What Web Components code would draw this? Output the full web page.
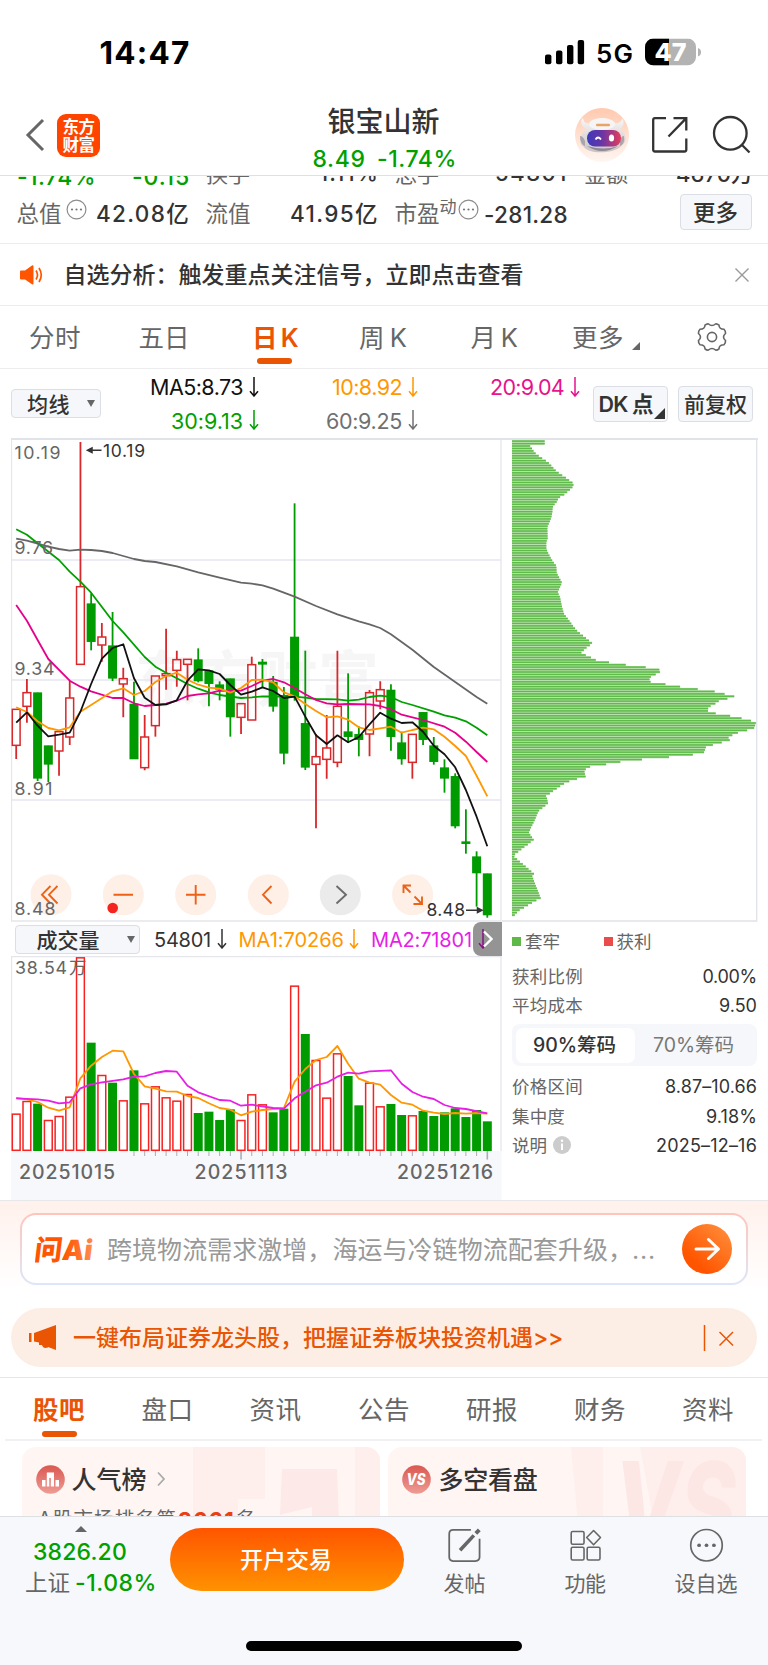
<!DOCTYPE html>
<html lang="zh-CN">
<head>
<meta charset="utf-8">
<title>银宝山新 - 日K</title>
<style>
html,body{margin:0;padding:0;background:#fff}
body{width:768px;height:1665px;overflow:hidden;font-family:Inter,"Noto Sans CJK SC",sans-serif;color:#333}
</style>
</head>
<body>
<stock-page></stock-page>
<script>
const FONT = 'Inter,"Noto Sans CJK SC",sans-serif';
const define = (name, html, setup) => {
  const t = document.createElement('template');
  t.innerHTML = html;
  customElements.define(name, class extends HTMLElement {
    constructor() {
      super();
      this.attachShadow({mode: 'open'}).append(t.content.cloneNode(true));
    }
    connectedCallback() { if (setup) setup(this, this.shadowRoot); }
  });
};

/* One line of text: s size, c colour, b weight, m left offset, w advance width */
define('f-t', `<style>
:host{display:block;flex:none;white-space:nowrap;line-height:1}
span{display:inline-block;line-height:1;vertical-align:top;transform:translateY(var(--drop,.7px))}
</style><span><slot></slot></span>`, (el, root) => {
  const a = n => el.getAttribute(n), st = el.style;
  if (a('s')) st.fontSize = a('s') + 'px';
  if (a('c')) st.color = a('c');
  if (a('b')) st.fontWeight = a('b');
  if (a('m')) st.marginLeft = a('m') + 'px';
  if (/[\u4e00-\u9fff]/.test(el.textContent)) st.setProperty('--drop', '.055em');
  if (a('w')) {
    const w = +a('w'), sp = root.querySelector('span');
    const n = [...el.textContent].length;
    sp.style.letterSpacing = '0.001px';
    const nat = sp.getBoundingClientRect().width;
    sp.style.letterSpacing = ((w - nat) / n).toFixed(3) + 'px';
    st.width = w + 'px';
  }
});

define('down-arrow', `<style>:host{display:block;flex:none;width:10px;height:20px}svg{display:block}</style>
<svg width="10" height="20" viewBox="0 0 10 20" fill="none" stroke="currentColor" stroke-width="1.5"><path d="M5 0V19M1 14.2L5 19L9 14.2"/></svg>`);

define('info-dots', `<style>:host{display:block;flex:none;width:21px;height:21px}svg{display:block}</style>
<svg width="21" height="21" viewBox="0 0 21 21"><circle cx="10.5" cy="10.5" r="9.4" fill="none" stroke="#8c8c8c" stroke-width="1.2"/><g fill="#777"><circle cx="6" cy="10.5" r="1.1"/><circle cx="10.5" cy="10.5" r="1.1"/><circle cx="15" cy="10.5" r="1.1"/></g></svg>`);

define('chip-button', `<style>:host{display:flex;flex:none;box-sizing:border-box;align-items:center;border:1px solid #dcdee5;border-radius:4px;background:#f6f7fa;position:relative}</style><slot></slot>`);

define('status-bar', `<style>
:host{display:flex;box-sizing:border-box;height:95px;padding-top:9px;align-items:center}
svg{display:block;flex:none}
</style>
<f-t m="99.500" w="91" s="31.5" b="700" c="#000" style="--drop:1px">14:47</f-t>
<svg style="margin-left:354.500px" width="40" height="26" viewBox="0 0 40 26"><rect x="0" y="15.5" width="6.4" height="9.7" rx="2"/><rect x="11" y="11.5" width="6.4" height="13.7" rx="2"/><rect x="22" y="6" width="6.4" height="19.2" rx="2"/><rect x="32.7" y="1" width="6.4" height="24.2" rx="2"/></svg>
<f-t m="11" w="38" s="26" b="600" c="#000" style="--drop:1.700px">5G</f-t>
<svg style="margin-left:11px" width="58" height="28" viewBox="645 37.5 58 28"><clipPath id="k"><rect x="645" y="38" width="51" height="27" rx="8.5"/></clipPath><g clip-path="url(#k)"><rect x="645" y="38" width="51" height="27" fill="#b3b3b3"/><rect x="645" y="38" width="24" height="27"/></g><path d="M698 47.5a4.5 4.5 0 0 1 0 8.500z" fill="#b3b3b3"/><text x="654.500" y="60.6" font-family='${FONT}' font-weight="800" font-size="25" textLength="32" lengthAdjust="spacingAndGlyphs" fill="#fff">47</text></svg>`);

define('app-header', `<style>
:host{display:flex;height:80px;align-items:center;border-bottom:1px solid #e0e0e2}
svg{display:block;flex:none}
.logo{flex:none;width:43px;height:43px;border-radius:9px;background:#ff4400;margin-left:12px;display:flex;flex-direction:column;justify-content:center;gap:1px}
.mid{width:160px;height:80px;margin-left:213px;flex:none;display:flex;flex-direction:column;padding-top:11px;box-sizing:border-box}
.p{display:flex;margin-top:12.500px}
</style>
<svg style="margin-left:25px" width="20" height="34" viewBox="0 0 20 34" fill="none" stroke="#666" stroke-width="3"><path d="M18 2L3 17L18 32"/></svg>
<div class="logo"><f-t m="5.5" w="32" s="16.5" b="700" c="#fff">东方</f-t><f-t m="5.500" w="32" s="16.5" b="700" c="#fff">财富</f-t></div>
<div class="mid"><f-t m="14.500" w="112" s="28" b="500" c="#333">银宝山新</f-t>
<div class="p"><f-t m="-.500" w="53" s="23" b="500" c="#00a000">8.49</f-t><f-t m="11.500" w="80" s="23" b="500" c="#00a000">-1.74%</f-t></div></div>
<svg style="margin-left:102px" width="54" height="54" viewBox="0 0 54 54">
<defs><linearGradient id="a" x2="0" y2="1"><stop stop-color="#ffc9ae"/><stop offset="1" stop-color="#fff6f2"/></linearGradient><linearGradient id="b"><stop stop-color="#3d3ab8"/><stop offset=".45" stop-color="#6a35a5"/><stop offset="1" stop-color="#e63c5c"/></linearGradient><linearGradient id="c" x2="0" y2="1"><stop stop-color="#f8f6f6"/><stop offset="1" stop-color="#c9c3c6"/></linearGradient></defs>
<circle cx="27" cy="27" r="27" fill="url(#a)"/>
<path d="M11 21C5 17 5 12 8 10C9 15 12 16 16 15.500C22 9 32 8 39 15C43 16 46 14 47.500 10.500C50 15 48 19 45 21C52 26 52 34 47 37C43 45 14 48 8 38C4 36 4 27 11 21Z" fill="url(#c)"/>
<ellipse cx="27" cy="16" rx="13" ry="6" fill="#f6f4f5"/><rect x="21" y="15.800" width="14" height="2.500" rx="1" fill="#e8a468"/>
<path d="M5 28q3 0 5 5v5q-5-2-5-10zM49 28q-3 0-4 5v5q5-2 4-10z" fill="#aaa5aa"/>
<rect x="12" y="22" width="34" height="16.500" rx="8" fill="url(#b)"/>
<path d="M20.500 31.500q2.500-4 5.500 0" fill="none" stroke="#fff" stroke-width="1.800"/><ellipse cx="36.500" cy="30" rx="2.600" ry="3.500" fill="#fff"/><path d="M12 38q15 10 31 0-13 5-31 0z" fill="#8e8992"/></svg>
<svg style="margin-left:22px" width="38" height="38" viewBox="651 116.500 38 38" fill="none" stroke="#333" stroke-width="2.300"><path d="M666 118.600H655Q653.200 118.600 653.200 120.400V150Q653.200 152 655 152H684.500Q686.300 152 686.300 150V139M673.500 118.600H686.300V131M686.300 118.600L668.500 137"/></svg>
<svg style="margin-left:22px" width="42" height="42" viewBox="711 114 42 42" fill="none" stroke="#333" stroke-width="2.300"><circle cx="730.300" cy="133.300" r="16.300"/><path d="M741.500 144.500L749.500 152.500"/></svg>`);

define('quote-panel', `<style>
:host{display:block;height:67px;border-bottom:1px solid #ececee}
.cut{display:flex;height:12px;overflow:hidden;align-items:flex-end}
.cut f-t{--drop:0px}
.row{display:flex;height:51px;align-items:center}
</style>
<div class="cut"><f-t m="17" w="79" s="23" b="500" c="#00a000" style="margin-bottom:-1px">-1.74%</f-t><f-t m="36" w="58" s="23" b="500" c="#00a000" style="margin-bottom:-1px">-0.15</f-t>
<f-t m="16" w="44" s="22" c="#666" style="margin-bottom:4px">换手</f-t><f-t m="69" w="60" s="22" b="500" style="margin-bottom:4.500px">1.11%</f-t><f-t m="16" w="44" s="22" c="#666" style="margin-bottom:4px">总手</f-t><f-t m="56" w="73" s="22" b="500" style="margin-bottom:4.500px">54801</f-t><f-t m="16" w="44" s="22" c="#666" style="margin-bottom:4px">金额</f-t><f-t m="48" w="77" s="22" b="500" style="margin-bottom:4.500px">4670万</f-t></div>
<div class="row"><f-t m="16.500" w="45" s="22.500" c="#666">总值</f-t><info-dots style="margin:0 0 9px 4px"></info-dots><f-t m="9.500" w="94" s="22.500" b="500">42.08亿</f-t><f-t m="15.500" w="45" s="22.500" c="#666">流值</f-t><f-t m="39.500" w="89" s="22.500" b="500">41.95亿</f-t><f-t m="15.500" w="45" s="22.500" c="#666">市盈</f-t><f-t m="0" w="17" s="17" c="#666" style="margin-bottom:15px">动</f-t><info-dots style="margin:0 0 9px 1px"></info-dots><f-t m="5.500" w="84" s="22.500" b="500" style="--drop:1.800px">-281.28</f-t>
<chip-button style="width:72px;height:36px;margin-left:111.500px;margin-bottom:3px"><f-t m="12.500" w="45" s="22.500" b="500">更多</f-t></chip-button></div>`);

define('notice-row', `<style>:host{display:flex;height:61px;align-items:center;border-bottom:1px solid #ececee}svg{display:block;flex:none}</style>
<svg style="margin-left:20px" width="24" height="20" viewBox="0 0 24 20" fill="#ff5500"><path d="M0 6.500Q0 5.500 1 5.500H5L12 .5Q13.500-.2 13.500 1.500V18.500Q13.500 20 12 19.300L5 14.500H1Q0 14.500 0 13.500Z"/><path d="M16 5.500q3 4.500 0 9M19 3q4.500 7 0 14" fill="none" stroke="#ff5500" stroke-width="1.700"/></svg>
<f-t m="19.500" w="460" s="23" b="500" style="width:460px">自选分析：触发重点关注信号，立即点击查看</f-t>
<svg style="margin-left:210.500px" width="16" height="16" viewBox="0 0 16 16" stroke="#999" stroke-width="1.400"><path d="M1.500 1.500L14.500 14.500M14.500 1.500L1.500 14.500"/></svg>`);

define('period-tabs', `<style>:host{display:flex;height:62px;align-items:center;border-bottom:1px solid #ececee;position:relative}svg{display:block;flex:none}
i{position:absolute;left:257px;top:52px;width:35px;height:5.500px;border-radius:3px;background:#ea5504}</style>
<f-t m="29" w="52" s="25.500" c="#666">分时</f-t><f-t m="57.500" w="51" s="25.500" c="#666">五日</f-t><f-t m="62.500" w="45" s="25.500" b="600" c="#ea5504">日 K</f-t><f-t m="62" w="47" s="25.500" c="#666">周 K</f-t><f-t m="64.500" w="46" s="25.500" c="#666">月 K</f-t><f-t m="55.500" w="52" s="25.500" c="#666">更多</f-t>
<svg style="margin:17px 0 0 8px" width="8" height="8"><path d="M8 0V8H0Z" fill="#666"/></svg>
<svg style="margin-left:56.500px" width="30" height="30" viewBox="-15 -15 30 30" fill="none" stroke="#666" stroke-width="1.600"><path d="M-3.500-13Q0-10 3.500-13Q5-13.500 7-11.800Q7.200-7.800 12-7.800Q13.800-6 13.500-3.500Q9.500 0 13.500 3.500Q13.800 6 12 7.800Q7.200 7.800 7 11.800Q5 13.500 3.500 13Q0 10-3.500 13Q-5 13.500-7 11.800Q-7.200 7.800-12 7.800Q-13.800 6-13.500 3.500Q-9.500 0-13.500-3.500Q-13.800-6-12-7.800Q-7.200-7.800-7-11.800Q-5-13.500-3.500-13Z"/><circle r="4.600"/></svg><i></i>`);

define('ma-toolbar', `<style>:host{display:flex;height:69px;align-items:center}svg{display:block}
.g{display:grid;grid-template-columns:142px 159px 162px;grid-template-rows:33.500px 33.500px;margin-left:16px;flex:none;align-content:center;position:relative}
.g div{display:flex;justify-content:flex-end;align-items:center;gap:6px}</style>
<chip-button style="width:90px;height:29px;margin-left:11px"><f-t m="15" w="43" s="21" b="500">均线</f-t><svg style="margin-left:17px" width="8" height="7"><path d="M0 0H8L4 7Z" fill="#666"/></svg></chip-button>
<div class="g">
<div style="color:#111"><f-t w="93" s="21.500">MA5:8.73</f-t><down-arrow></down-arrow></div><div style="color:#ff9800"><f-t w="70" s="21.500">10:8.92</f-t><down-arrow></down-arrow></div><div style="color:#e6138c"><f-t w="74" s="21.500">20:9.04</f-t><down-arrow></down-arrow></div>
<div style="color:#00a000"><f-t w="72" s="21.500">30:9.13</f-t><down-arrow></down-arrow></div><div style="color:#707070"><f-t w="76" s="21.500">60:9.25</f-t><down-arrow></down-arrow></div></div>
<chip-button style="width:75px;height:36px;margin-left:13px"><f-t m="4.500" w="54" s="21.500" b="600">DK 点</f-t><svg style="margin:20px 0 0 1px" width="11" height="11"><path d="M11 0V11H0Z" fill="#333"/></svg></chip-button>
<chip-button style="width:75px;height:36px;margin-left:10px"><f-t m="5" w="63" s="21" b="500">前复权</f-t></chip-button>`);

/* Series: x position of the n-th trading day */
const X = i => 16.2 + 10.707 * i;
const NS = 'http://www.w3.org/2000/svg';
const add = (p, n, at) => { const e = document.createElementNS(NS, n); for (const k in at) e.setAttribute(k, at[k]); p.append(e); return e; };
const line = (g, pts, y0, color) => add(g, 'polyline', {points: pts.trim().split(/\s+/).map(s => { const [i, y] = s.split(':'); return X(+i).toFixed(1) + ',' + (y0 + y / 3).toFixed(1); }).join(' '), fill: 'none', stroke: color, 'stroke-width': 1.8, 'stroke-linejoin': 'round'});

const CANDLES = `r838,838,946,987 r747,788,829,878 g788,788,1045,1053 g947,947,1003,1056 r905,905,963,1037 r752,804,921,945 r36,470,703,703 g490,521,635,661 r579,621,645,695 g546,647,745,753 r713,746,762,862 g755,822,987,987 r855,921,1013,1021 r738,738,887,920 r596,731,737,779 r662,689,721,770 r688,688,703,811 g655,689,753,757 g722,722,761,829 g754,764,778,811 g746,746,861,920 r821,821,862,912 r680,704,870,870 g687,696,703,772 g738,756,829,845 g771,796,970,1003 g220,621,800,812 g662,880,1012,1020 r912,980,1003,1195 r855,954,988,1046 r662,829,997,1012 g730,905,920,938 g889,913,929,979 r780,788,912,979 r754,779,813,838 g763,780,920,962 g905,938,987,1004 r913,913,997,1046 g847,847,929,945 g921,947,995,1004 g988,1013,1045,1088 g1030,1039,1188,1195 g1138,1235,1241,1271 g1264,1280,1329,1430 g1331,1331,1455,1463`.split(' ');
const MA = {
  '#666': '0:326 1:332 2:341 3:350 4:357 5:362 6:359 7:360 8:363 9:369 10:378 11:387 12:393 13:396 15:409 17:427 19:443 21:458 22:461 23:466 24:476 25:488 26:500 28:528 30:553 32:574 33:583 34:594 35:613 37:659 39:711 41:756 43:801 44:821',
  '#00a000': '0:298 1:314 2:340 4:390 5:425 6:455 7:488 9:573 10:607 12:681 13:710 14:728 15:745 16:762 17:776 18:787 19:795 21:804 22:802 23:799 26:800 27:803 28:807 30:808 31:812 32:809 33:801 34:797 35:801 36:816 37:825 39:845 40:856 41:863 42:874 43:893 44:916',
  '#e6008c': '0:525 1:572 2:630 3:687 5:752 6:770 7:784 9:804 10:804 11:820 12:828 13:825 14:821 15:812 16:798 17:793 18:790 19:782 20:783 21:782 22:768 23:752 24:747 25:757 26:774 27:793 28:810 29:820 30:823 31:822 33:823 34:828 35:838 36:854 37:862 38:870 40:890 41:908 42:935 43:966 44:996',
  '#ff9800': '0:832 1:846 2:874 3:894 4:901 5:892 6:845 7:825 9:784 10:775 11:795 12:783 13:756 14:738 15:728 16:749 17:764 18:773 19:776 20:788 21:774 22:750 23:749 24:757 25:787 26:799 27:822 28:843 29:862 30:859 31:869 32:892 33:900 34:895 35:890 36:908 37:900 38:893 39:898 40:920 41:948 42:978 43:1037 44:1099',
  '#111': '0:878 1:847 2:887 3:919 4:914 5:908 6:845 7:762 8:686 9:654 10:643 11:745 12:803 13:825 14:823 15:811 16:752 17:718 18:721 19:732 20:765 21:794 22:785 23:772 24:783 25:804 26:800 27:860 28:916 29:942 30:916 31:937 32:921 33:883 34:848 35:866 36:879 37:877 38:905 39:947 40:973 41:1012 42:1080 43:1160 44:1249'
};

define('kline-chart', `<style>:host{display:block;height:482px}svg{display:block}text{font-family:${FONT}}</style>
<svg width="491" height="482" viewBox="11 440 491 482">
<text x="135" y="702" font-size="61" font-weight="700" fill="#f6f6f7" textLength="244">东方财富</text>
<g stroke="#e6e8f1" stroke-width="1.500"><path d="M11 560H501M11 680H501M11 800H501"/></g><path d="M11.500 440V921H501V440" fill="none" stroke="#e4e6ec" stroke-width="1.300"/>
<g fill="#feefe7"><circle cx="51" cy="894.700" r="20.500"/><circle cx="123.300" cy="894.700" r="20.500"/><circle cx="195.700" cy="894.700" r="20.500"/><circle cx="268.300" cy="894.700" r="20.500"/><circle cx="412.600" cy="894.700" r="20.500"/></g><circle cx="340.300" cy="894.700" r="20.500" fill="#ebebeb"/>
<g fill="none" stroke="#ee6217" stroke-width="1.900"><path d="M50.500 886L42 894.700L50.500 903.500M57.500 886L49 894.700L57.500 903.500M113.500 894.700H133M186 894.700H205.500M195.700 885V904.500M271.500 886L263 894.700L271.500 903.500"/><path d="M410.500 892.500L403.500 885.500M403.500 893V885.500H411M414.500 896.500L422 904M422 896.500V904H413.500"/></g><path d="M336.500 886L346 894.700L336.500 903.500" fill="none" stroke="#6b6b6b" stroke-width="1.900"/>
<circle cx="112.700" cy="908" r="5.300" fill="#f5241f"/>
<g id="c"></g><g id="l"></g>
<g fill="#666" font-size="17.800"><text x="14.500" y="458.700" textLength="46">10.19</text><text x="14.500" y="554" textLength="38.500">9.76</text><text x="14.500" y="674.700" textLength="40">9.34</text><text x="14.500" y="794.900" textLength="38">8.91</text><text x="14.500" y="915.200" textLength="41">8.48</text></g>
<g fill="#333" font-size="17.500"><text x="103" y="456.700" textLength="42">10.19</text><text x="426.500" y="916.400" textLength="38.500">8.48</text></g>
<g stroke="#333" stroke-width="1.500" fill="#333"><path d="M101.500 450.300H88M92 448L87.500 450.300L92 452.600ZM466 910.300H480M477.500 908L482 910.300L477.500 912.600Z"/></g></svg>`, (el, r) => {
  const c = r.getElementById('c');
  if (c.childNodes.length) return;
  CANDLES.forEach((s, i) => {
    const [h, t, b, l] = s.slice(1).split(',').map(v => 430 + v / 3), x = X(i), red = s[0] === 'r', col = red ? '#d8282b' : '#009b00';
    add(c, 'path', {d: red ? `M${x} ${h}V${t}M${x} ${b}V${l}` : `M${x} ${h}V${l}`, stroke: col, 'stroke-width': 1.8});
    add(c, 'rect', red ? {x: x - 3.9, y: t, width: 7.8, height: b - t, fill: 'none', stroke: col, 'stroke-width': 1.5} : {x: x - 4.5, y: t - .3, width: 9, height: b - t + .6, fill: col});
  });
  for (const k in MA) line(r.getElementById('l'), MA[k], 430, k);
});

const VOL = 'r581 r543 g551 r600 r588 r530 r112 g368 r465 g488 r541 g451 r550 r499 r532 r542 r522 g579 g575 g600 g568 r600 r523 r553 g577 g566 r197 g342 r420 r533 r400 g468 g556 r488 r559 g552 g585 r586 g573 g588 g577 g565 g591 g570 g604'.split(' ');
define('volume-chart', `<style>:host{display:block;height:244px}svg{display:block}text{font-family:${FONT}}</style>
<svg width="491" height="244" viewBox="11 956 491 244"><rect x="11" y="1151" width="490.500" height="49" fill="#f7f8fb"/>
<path d="M11.500 1151V956.700H501V1151" fill="none" stroke="#e4e6ec" stroke-width="1.300"/><g id="v"></g>
<g fill="#666"><text x="15" y="974" font-size="17.800" textLength="52">38.54</text><text x="69" y="974" font-size="17.500">万</text></g>
<g fill="#666" font-size="19.500" font-weight="500"><text x="19" y="1179" textLength="96">20251015</text><text x="194.500" y="1179" textLength="93">20251113</text><text x="397" y="1179" textLength="96">20251216</text></g></svg>`, (el, r) => {
  const g = r.getElementById('v');
  if (g.childNodes.length) return;
  VOL.forEach((s, i) => {
    const t = 920 + s.slice(1) / 3, x = X(i), red = s[0] === 'r';
    add(g, 'rect', red ? {x: x - 3.9, y: t + .5, width: 7.8, height: 1149.8 - t, fill: '#fff', stroke: '#f52322', 'stroke-width': 1.5} : {x: x - 4.5, y: t, width: 9, height: 1151 - t, fill: '#009b00'});
    if (i > 10) add(g, 'path', {d: `M${x} 1151V${i === 21 || i === 44 ? 1159.5 : 1156}`, stroke: '#aaadb3', 'stroke-width': i === 21 || i === 44 ? 1.6 : 1});
  });
  line(g, '0:534 1:538 2:546 3:563 4:572 5:562 6:475 7:437 8:411 9:392 10:394 11:462 12:499 13:506 14:514 15:515 16:528 17:534 18:550 19:564 20:569 21:586 22:575 23:570 25:564 26:485 27:447 28:420 29:411 30:378 31:431 32:476 33:488 34:494 35:525 36:548 37:554 38:572 39:578 40:582 41:579 42:581 43:579 44:581', 920, '#ff9800');
  line(g, '0:535 2:538 3:542 4:550 5:547 6:505 7:493 8:487 10:478 11:470 12:469 13:459 14:453 15:455 16:497 17:517 19:540 20:542 21:557 22:554 24:564 25:566 26:535 28:496 29:488 30:470 31:458 32:461 33:454 35:451 36:491 37:516 38:530 39:537 40:555 41:564 42:567 44:580', 920, '#e61ee6');
});

define('volume-toolbar', `<style>:host{display:flex;height:34px;align-items:center;width:491px;overflow:hidden;position:relative}svg{display:block}
.more{position:absolute;right:0;top:0;width:29px;height:34px;border-radius:8px 0 0 8px;background:rgba(0,0,0,.42);display:flex;align-items:center;justify-content:center}</style>
<chip-button style="width:125px;height:29px;margin-left:4px"><f-t m="20.500" w="63" s="21" b="500">成交量</f-t><svg style="margin-left:27px" width="8" height="7"><path d="M0 0H8L4 7Z" fill="#666"/></svg></chip-button>
<f-t m="14" w="57" s="20" c="#333">54801</f-t><down-arrow style="margin-left:6px;color:#333"></down-arrow>
<f-t m="11.500" w="105.500" s="20" c="#ff9800">MA1:70266</f-t><down-arrow style="margin-left:5px;color:#ff9800"></down-arrow>
<f-t m="12" w="101" s="20" c="#e61ee6">MA2:71801</f-t><down-arrow style="margin-left:6px;color:#e61ee6"></down-arrow>
<div class="more"><svg width="10" height="18" viewBox="0 0 10 18" fill="none" stroke="#fff" stroke-width="2.400"><path d="M1 1.500L8.500 9L1 16.500"/></svg></div>`);

const CHIPS = '33:134 40:134 43:87 50:92 58:98 65:102 72:109 80:120 87:130 94:141 101:149 109:156 116:162 124:170 131:180 138:190 145:201 153:211 160:221 167:220 174:216 181:208 189:199 196:190 203:177 210:173 218:169 225:162 232:158 247:157 262:154 276:149 284:145 291:142 326:143 335:139 357:139 370:145 385:153 393:158 400:163 407:169 429:170 443:178 458:186 472:180 487:173 501:180 516:183 530:186 545:190 553:193 560:199 575:210 590:221 604:233 619:252 633:269 640:278 647:268 655:257 669:243 677:262 691:290 698:334 706:390 713:450 720:484 727:479 735:464 742:450 750:448 757:453 764:508 771:547 778:600 786:655 793:678 800:707 807:679 815:651 822:645 829:630 836:624 844:624 851:651 858:695 866:731 873:757 880:769 887:765 895:762 902:738 909:711 916:696 924:684 931:690 938:663 946:634 953:615 960:615 967:612 974:578 982:499 989:420 996:359 1004:313 1011:266 1018:257 1026:253 1040:257 1047:230 1055:205 1062:191 1069:180 1076:170 1084:158 1091:149 1098:138 1105:141 1120:144 1127:136 1135:126 1142:117 1149:113 1171:104 1193:93 1207:87 1214:91 1229:101 1236:92 1244:83 1251:73 1258:64 1266:54 1273:45 1280:43 1288:52 1295:60 1309:77 1324:94 1331:102 1338:97 1353:102 1404:122 1411:109 1418:96 1426:84 1433:72 1440:59 1447:51 1458:42'.split(' ').map(s => s.split(':').map(Number));
define('chip-profile', `<style>:host{display:block;height:482px}svg{display:block}</style>
<svg width="256" height="482" viewBox="502 440 256 482"><path d="M756.700 440V921H502" fill="none" stroke="#dfe2ea" stroke-width="1.300"/><g id="p"></g></svg>`, (el, r) => {
  const g = r.getElementById('p');
  if (g.childNodes.length) return;
  for (let n = 0; n < 196; n++) {
    const y = 33.5 + n * 7.29;
    let k = 1;
    while (k < CHIPS.length - 1 && CHIPS[k][0] < y - .8) k++;
    const [a, va] = CHIPS[k - 1], [b, vb] = CHIPS[k];
    const v = n === 0 ? 134 : va + (vb - va) * Math.max(0, Math.min(1, (y - a) / (b - a)));
    const py = 430 + y / 3, w = (v - 36) / 3;
    add(g, 'rect', {x: 512, y: py - 1.1, width: w, height: 2.3, fill: '#98d488'});
    add(g, 'rect', {x: 512, y: py - .65, width: w, height: 1.3, fill: '#5fba4a'});
  }
});

define('data-row', `<style>:host{display:flex;justify-content:space-between;align-items:center;box-sizing:border-box}div{display:flex;align-items:center}</style><div><slot></slot></div><slot name="value"></slot>`);
define('chip-panel', `<style>:host{display:block;padding:0 1px 0 10px}svg{display:block}
.lg{display:flex;height:38px;align-items:center}.lg i{width:9px;height:9px;background:#5fb947}
.seg{display:flex;box-sizing:border-box;height:42px;margin:6px 0 5px 0;padding:3.500px;border-radius:8px;background:#f6f7fa}.seg div{flex:1;display:flex;align-items:center}.on{background:#fff;border-radius:7px}</style>
<div class="lg"><i></i><f-t m="4" w="35" s="17.500" c="#666">套牢</f-t><i style="background:#ea4b4b;margin-left:43.500px"></i><f-t m="4" w="35" s="17.500" c="#666">获利</f-t></div>
<data-row style="height:31px"><f-t w="71" s="17.500" c="#666">获利比例</f-t><f-t slot="value" w="54.500" s="18">0.00%</f-t></data-row>
<data-row style="height:27px"><f-t w="71" s="17.500" c="#666">平均成本</f-t><f-t slot="value" w="38" s="18">9.50</f-t></data-row>
<div class="seg"><div class="on"><f-t m="17.500" w="83" s="19.500" b="500">90%筹码</f-t></div><div><f-t m="18.500" w="81" s="19.500" c="#777">70%筹码</f-t></div></div>
<data-row style="height:30px"><f-t w="71" s="17.500" c="#666">价格区间</f-t><f-t slot="value" w="92" s="18">8.87–10.66</f-t></data-row>
<data-row style="height:29px"><f-t w="53" s="17.500" c="#666">集中度</f-t><f-t slot="value" w="51" s="18">9.18%</f-t></data-row>
<data-row style="height:30px"><f-t w="35" s="17.500" c="#666">说明</f-t><svg style="margin-left:6px" width="18" height="18"><circle cx="9" cy="9" r="9" fill="#ccc"/><path d="M9 7.500V14" stroke="#fff" stroke-width="2"/><circle cx="9" cy="4.800" r="1.200" fill="#fff"/></svg><f-t slot="value" w="101" s="18">2025–12–16</f-t></data-row>`);

define('chart-board', `<style>:host{display:grid;box-sizing:border-box;grid-template-columns:491px 256px;margin-left:11px;width:747px;height:762px;border-top:2px solid #e0e3ea}</style>
<div><kline-chart></kline-chart><volume-toolbar></volume-toolbar><volume-chart></volume-chart></div><div><chip-profile></chip-profile><chip-panel></chip-panel></div>`);

define('ask-ai', `<style>:host{display:block;height:100px;box-sizing:border-box;border-top:1px solid #e8e8ea;background:linear-gradient(#fff1ec,#fff 90%);padding:12px 20px 0}
div{display:flex;align-items:center;box-sizing:border-box;height:72px;border:2px solid transparent;border-radius:16px;background:linear-gradient(#fff,#fff) padding-box,linear-gradient(#ffc4bb,#dde7f9) border-box}svg{display:block;flex:none}</style>
<div><svg style="margin-left:13px" width="62" height="34" viewBox="0 0 62 34"><defs><linearGradient id="g"><stop offset=".5" stop-color="#ff5500"/><stop offset="1" stop-color="#ff8a50"/></linearGradient></defs><text transform="translate(-1.500 27.500) skewX(-7)" font-family='${FONT}' font-weight="900" font-size="28" fill="url(#g)" textLength="58" lengthAdjust="spacingAndGlyphs">问Ai</text></svg>
<f-t m="10" w="526" s="25" c="#999">跨境物流需求激增，海运与冷链物流配套升级，</f-t><f-t m="-1" w="24" s="25" c="#999">...</f-t>
<svg style="margin-left:25.500px" width="50" height="50" viewBox="0 0 50 50"><defs><linearGradient id="h" x1="1" y1="0" x2=".3" y2=".8"><stop stop-color="#ff9340"/><stop offset="1" stop-color="#ff5500"/></linearGradient></defs><circle cx="25" cy="25" r="25" fill="url(#h)"/><path d="M14 25H36M26.500 15.500L36.500 25L26.500 34.500" fill="none" stroke="#fff" stroke-width="3" stroke-linecap="round" stroke-linejoin="round"/></svg></div>`);

define('promo-banner', `<style>:host{display:flex;align-items:center;height:59px;margin:8px 11px 10px;border-radius:30px;background:#fdeee5}svg{display:block;flex:none}</style>
<svg style="margin-left:18px" width="28" height="25" viewBox="0 0 28 25" fill="#ea5504"><path d="M0 8H2.500V17H0ZM5 8L27 0V25L19 22V22.500Q14 24 13 20H10V17.500L5 16.500Z"/></svg>
<f-t m="16" w="460" s="23" b="500" c="#ea5504">一键布局证券龙头股，把握证券板块投资机遇</f-t><f-t w="30" s="23" b="500" c="#ea5504">&gt;&gt;</f-t>
<svg style="margin-left:140px" width="32" height="28" viewBox="704 1323 32 28" stroke="#ea5504" stroke-width="1.500"><path d="M705.500 1324V1350M720.500 1331L734 1344.500M734 1331L720.500 1344.500"/></svg>`);

define('section-tabs', `<style>:host{display:flex;align-items:center;height:61px;border-top:1px solid #e6e6e8;position:relative}i{position:absolute;left:42px;top:53px;width:35px;height:5.500px;border-radius:3px;background:#ea5504}hr{position:absolute;left:5px;right:6px;bottom:-2px;height:2px;border:0;margin:0;background:#f1f1f3}</style>
<f-t m="33" w="52" s="25.500" b="600" c="#ea5504">股吧</f-t><f-t m="56.500" w="52" s="25.500" c="#666">盘口</f-t><f-t m="56" w="52" s="25.500" c="#666">资讯</f-t><f-t m="56.500" w="52" s="25.500" c="#666">公告</f-t><f-t m="56" w="52" s="25.500" c="#666">研报</f-t><f-t m="56" w="52" s="25.500" c="#666">财务</f-t><f-t m="56" w="52" s="25.500" c="#666">资料</f-t><i></i><hr>`);

define('card-row', `<style>:host{display:flex;gap:8px;margin:8px 22px 0;height:69px;overflow:hidden}
.card{flex:none;width:358px;height:100px;border-radius:14px;background:#fff6f4;position:relative;overflow:hidden}.bg{position:absolute;left:0;top:0}.h{display:flex;align-items:center;height:64px;position:relative}.s{display:flex;position:relative;margin-top:-2.500px}svg{display:block;flex:none}text{font-family:${FONT}}</style>
<div class="card"><svg class="bg" width="358" height="100"><g fill="#feefed"><path d="M171 0H243V52H216V82H171Z"/><path d="M333 0H358V100H333Z"/></g><path d="M260 22H315L318 100H290V60L258 68Z" fill="#fde9e7"/></svg>
<div class="h"><svg style="margin-left:13.500px" width="29" height="29"><defs><linearGradient id="q" x2="0" y2="1"><stop stop-color="#da5751"/><stop offset="1" stop-color="#ee9c95"/></linearGradient></defs><circle cx="14.500" cy="14.500" r="14.300" fill="url(#q)"/><path d="M6 15H9.500V21.500H6ZM10.800 7.500H18V21.500H14.800V13H13.300V21.500H10.800ZM19.500 15H23V21.500H19.500Z" fill="#fff"/></svg><f-t m="7" w="75" s="25" b="500">人气榜</f-t><svg style="margin-left:10px" width="9" height="16" fill="none" stroke="#aaa" stroke-width="1.800"><path d="M1 1.500L7 8L1 14.500"/></svg></div>
<div class="s"><f-t m="16" w="139" s="19.500" c="#666">A股市场排名第</f-t><f-t m="1" w="57" s="21" b="800" c="#e8410f">3661</f-t><f-t m="1" w="20" s="19.500" c="#666">名</f-t></div></div>
<div class="card"><svg class="bg" width="358" height="100"><path d="M183 0H215V100H192ZM252 0H358V100H270Z" fill="#feefed"/><text x="226" y="103" font-size="122" font-weight="800" font-style="italic" textLength="122" lengthAdjust="spacingAndGlyphs" fill="#fde7e5">VS</text></svg>
<div class="h"><svg style="margin-left:13.500px" width="29" height="29"><circle cx="14.500" cy="14.500" r="14.300" fill="url(#q2)"/><defs><linearGradient id="q2" x2="0" y2="1"><stop stop-color="#da5751"/><stop offset="1" stop-color="#ee9c95"/></linearGradient></defs><text x="4.500" y="20" font-size="16" font-weight="800" font-style="italic" fill="#fff" textLength="19" lengthAdjust="spacingAndGlyphs">VS</text></svg><f-t m="8" w="99" s="25" b="500">多空看盘</f-t></div></div>`);

define('bottom-bar', `<style>:host{display:block;height:149px;box-sizing:border-box;border-top:1px solid #dddfe3;background:#f7f8fb;position:relative}svg{display:block}
.r{display:flex;height:76px}.idx{width:170px;flex:none}.idx div{display:flex}.btn{flex:none;width:234px;height:63px;margin-top:11px;border-radius:32px;background:linear-gradient(#ff5500,#ff9200);display:flex;align-items:center}
.it{flex:none;display:flex;flex-direction:column;align-items:center;padding-top:10.500px;gap:10px}.home{width:276px;height:10px;border-radius:5px;background:#000;margin:48px 0 0 246px}</style>
<div class="r"><div class="idx"><svg style="margin:8.500px 0 0 74.500px" width="12" height="6"><path d="M0 6L6 0L12 6Z" fill="#666"/></svg><f-t m="33" w="94" s="23" b="500" c="#00a000" style="margin-top:8.500px;--drop:1px">3826.20</f-t><div style="margin-top:8px"><f-t m="25" w="45" s="22.500" c="#666">上证</f-t><f-t m="5" w="82" s="23" b="500" c="#00a000">-1.08%</f-t></div></div>
<div class="btn"><f-t m="70" w="92" s="23" b="500" c="#fff">开户交易</f-t></div>
<div class="it" style="margin-left:43.500px;width:34px"><svg width="35" height="35" viewBox="447 1527 35 35" fill="none" stroke="#666" stroke-width="1.800"><path d="M471 1529H453Q449 1529 449 1533V1556.500Q449 1560.500 453 1560.500H475.500Q479.800 1560.500 479.800 1556.500V1538"/><path d="M460 1549.500L474 1534.500" stroke-width="3.600"/><path d="M476 1532.500L479.500 1529" stroke-width="4"/></svg><f-t w="42" s="21" c="#666">发帖</f-t></div>
<div class="it" style="margin-left:86.500px;width:34px"><svg width="35" height="35" viewBox="568 1527 35 35" fill="none" stroke="#666" stroke-width="1.600"><rect x="571" y="1530.500" width="13" height="13" rx="1.500"/><rect x="571" y="1546.500" width="13" height="13" rx="1.500"/><rect x="587.200" y="1546.500" width="13" height="13" rx="1.500"/><path d="M593.700 1529.500L600.700 1536.700L593.700 1544L586.700 1536.700Z" stroke-linejoin="round"/></svg><f-t w="41" s="21" c="#666">功能</f-t></div>
<div class="it" style="margin-left:87px;width:34px"><svg width="35" height="35" viewBox="0 0 35 35"><circle cx="17.500" cy="17.500" r="16" fill="none" stroke="#666" stroke-width="1.700"/><g fill="#666"><circle cx="10" cy="17.500" r="1.900"/><circle cx="17.500" cy="17.500" r="1.900"/><circle cx="25" cy="17.500" r="1.900"/></g></svg><f-t w="63" s="21" c="#666">设自选</f-t></div></div>
<div class="home"></div>`);

define('stock-page', `<style>:host{display:block;width:768px;height:1665px;background:#fff;overflow:hidden}</style>
<status-bar></status-bar><app-header></app-header><quote-panel></quote-panel><notice-row></notice-row><period-tabs></period-tabs><ma-toolbar></ma-toolbar><chart-board></chart-board><ask-ai></ask-ai><promo-banner></promo-banner><section-tabs></section-tabs><card-row></card-row><bottom-bar></bottom-bar>`);
</script>
</body>
</html>
